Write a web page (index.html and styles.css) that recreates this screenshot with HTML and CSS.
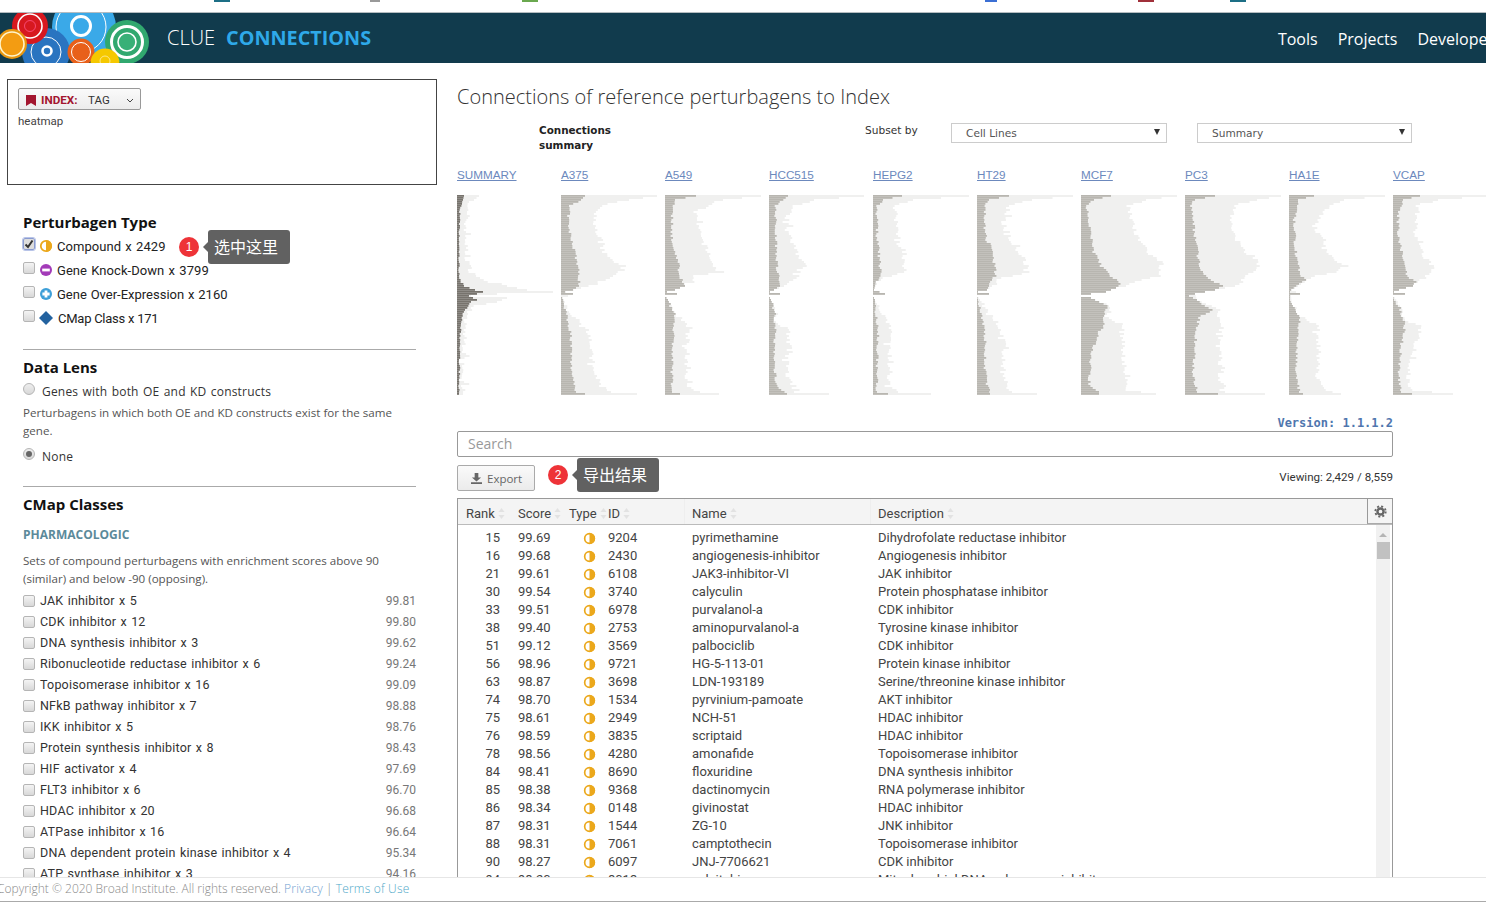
FILE: index.html
```html
<!DOCTYPE html>
<html lang="en">
<head>
<meta charset="utf-8">
<title>CLUE Connections</title>
<link rel="stylesheet" href="styles.css">
</head>
<body>
<svg class="defs" width="0" height="0" aria-hidden="true">
  <symbol id="i-half" viewBox="0 0 14 14"><circle cx="7" cy="7" r="5.2" fill="#fff" stroke="#eba81c" stroke-width="1.8"/><path d="M7 1v12a6 6 0 0 0 0-12z" fill="#eba81c"/></symbol>
  <symbol id="i-minus" viewBox="0 0 14 14"><circle cx="7" cy="7" r="6" fill="#a33bb8"/><rect x="3.2" y="5.6" width="7.6" height="2.8" fill="#fff"/></symbol>
  <symbol id="i-plus" viewBox="0 0 14 14"><circle cx="7" cy="7" r="6" fill="#3d9fd8"/><path d="M5.6 3.4h2.8v2.2h2.2v2.8H8.4v2.2H5.6V8.4H3.4V5.6h2.2z" fill="#fff"/></symbol>
  <symbol id="i-diamond" viewBox="0 0 14 14"><path d="M7 0l7 7-7 7-7-7z" fill="#23629f"/></symbol>
  <symbol id="i-sort" viewBox="0 0 7 11"><path d="M3.5 0L6.5 4H.5zM3.5 11L.5 7h6z" fill="#e2e2e2"/></symbol>
</svg>

<div class="bookmarks">
  <i class="bm bm-a"></i><i class="bm bm-b"></i><i class="bm bm-c"></i><i class="bm bm-d"></i><i class="bm bm-e"></i><i class="bm bm-f"></i>
</div>

<header class="topbar">
  <svg class="logo" viewBox="0 13 150 50" width="150" height="50" aria-label="CLUE logo">
    <circle cx="84" cy="27" r="32" fill="#3aa9e8"/>
    <circle cx="81" cy="27" r="25" fill="none" stroke="#fff" stroke-width="1"/>
    <circle cx="81" cy="26" r="9.5" fill="#3aa9e8" stroke="#fff" stroke-width="3"/>
    <circle cx="46" cy="52" r="24" fill="#2a74c0"/>
    <circle cx="46" cy="52" r="15" fill="none" stroke="#fff" stroke-width="1"/>
    <circle cx="47" cy="51" r="4.5" fill="#2a74c0" stroke="#fff" stroke-width="2.6"/>
    <circle cx="30" cy="26" r="18" fill="#d7181f"/>
    <circle cx="30" cy="26" r="12" fill="none" stroke="#fff" stroke-width="1.6"/>
    <circle cx="30" cy="26" r="5.5" fill="none" stroke="#f58" stroke-width=".8"/>
    <circle cx="12" cy="44" r="15" fill="#e8960f"/>
    <circle cx="12" cy="44" r="12" fill="#f39c12" stroke="#fff5cc" stroke-width="1.6"/>
    <circle cx="127" cy="42" r="22" fill="#31a86f"/>
    <circle cx="127" cy="42" r="15.5" fill="none" stroke="#fff" stroke-width="3"/>
    <circle cx="127" cy="42" r="9" fill="#38b077" stroke="#fff" stroke-width="1.6"/>
    <circle cx="81" cy="52" r="13.5" fill="#e8601a"/>
    <circle cx="81" cy="52" r="9.5" fill="none" stroke="#fff" stroke-width="1"/>
    <circle cx="105" cy="63" r="14.5" fill="#f5c800"/>
    <circle cx="105" cy="61" r="5" fill="none" stroke="#fde68a" stroke-width="1"/>
  </svg>
  <div class="brand"><span class="brand-light">CLUE</span><span class="brand-bold">CONNECTIONS</span></div>
  <nav class="nav"><a>Tools</a><a>Projects</a><a>Developer</a></nav>
</header>

<div class="main">
  <aside class="side">
    <div class="index-box">
      <button class="index-btn">
        <svg class="bookmark" viewBox="0 0 10 11" width="10" height="11"><path d="M0 0h10v11L5 8 0 11z" fill="#a3162f"/></svg>
        <b>INDEX:</b><span class="tag">TAG</span>
        <svg class="chev" viewBox="0 0 8 5" width="8" height="5"><path d="M1 1l3 3 3-3" fill="none" stroke="#444"/></svg>
      </button>
      <div class="heatmap">heatmap</div>
    </div>

    <section class="sec sec-type">
      <h3>Perturbagen Type</h3>
      <div class="pert"><span class="cb cb-on"><svg viewBox="0 0 12 12" width="12" height="12"><path d="M2.5 6.5l2.5 2.5 4.5-6.5" fill="none" stroke="#333" stroke-width="2"/></svg></span><svg class="pi"><use href="#i-half"/></svg><span>Compound x 2429</span></div>
      <div class="pert"><span class="cb"></span><svg class="pi"><use href="#i-minus"/></svg><span>Gene Knock-Down x 3799</span></div>
      <div class="pert"><span class="cb"></span><svg class="pi"><use href="#i-plus"/></svg><span class="pert-o">Gene Over-Expression x 2160</span></div>
      <div class="pert"><span class="cb"></span><svg class="pi pi-d"><use href="#i-diamond"/></svg><span class="pert-d">CMap Class x 171</span></div>
    </section>

    <section class="sec sec-lens">
      <h3>Data Lens</h3>
      <div class="radio-row"><span class="rd"></span><span>Genes with both OE and KD constructs</span></div>
      <p class="note note-lens">Perturbagens in which both OE and KD constructs exist for the same gene.</p>
      <div class="radio-row"><span class="rd rd-on"></span><span>None</span></div>
    </section>

    <section class="sec sec-classes">
      <h3>CMap Classes</h3>
      <h4>PHARMACOLOGIC</h4>
      <p class="note">Sets of compound perturbagens with enrichment scores above 90 (similar) and below -90 (opposing).</p>
      <ul class="classes">
        <li><span class="cb"></span><span class="cl">JAK inhibitor x 5</span><span class="cv">99.81</span></li>
        <li><span class="cb"></span><span class="cl">CDK inhibitor x 12</span><span class="cv">99.80</span></li>
        <li><span class="cb"></span><span class="cl">DNA synthesis inhibitor x 3</span><span class="cv">99.62</span></li>
        <li><span class="cb"></span><span class="cl">Ribonucleotide reductase inhibitor x 6</span><span class="cv">99.24</span></li>
        <li><span class="cb"></span><span class="cl">Topoisomerase inhibitor x 16</span><span class="cv">99.09</span></li>
        <li><span class="cb"></span><span class="cl">NFkB pathway inhibitor x 7</span><span class="cv">98.88</span></li>
        <li><span class="cb"></span><span class="cl">IKK inhibitor x 5</span><span class="cv">98.76</span></li>
        <li><span class="cb"></span><span class="cl">Protein synthesis inhibitor x 8</span><span class="cv">98.43</span></li>
        <li><span class="cb"></span><span class="cl">HIF activator x 4</span><span class="cv">97.69</span></li>
        <li><span class="cb"></span><span class="cl">FLT3 inhibitor x 6</span><span class="cv">96.70</span></li>
        <li><span class="cb"></span><span class="cl">HDAC inhibitor x 20</span><span class="cv">96.68</span></li>
        <li><span class="cb"></span><span class="cl">ATPase inhibitor x 16</span><span class="cv">96.64</span></li>
        <li><span class="cb"></span><span class="cl">DNA dependent protein kinase inhibitor x 4</span><span class="cv">95.34</span></li>
        <li><span class="cb"></span><span class="cl">ATP synthase inhibitor x 3</span><span class="cv">94.16</span></li>
      </ul>
    </section>
  </aside>

  <main class="content">
    <h1>Connections of reference perturbagens to Index</h1>
    <div class="controls">
      <div class="ctl-title">Connections<br>summary</div>
      <div class="ctl-label">Subset by</div>
      <div class="select sel-a"><span>Cell Lines</span><i class="caret"></i></div>
      <div class="select sel-b"><span>Summary</span><i class="caret"></i></div>
    </div>
    <div class="charts" id="charts"></div>
    <div class="version">Version: 1.1.1.2</div>
    <div class="search">Search</div>
    <div class="toolbar">
      <button class="export"><svg viewBox="0 0 12 12" width="11" height="11"><path d="M4 0h4v5h3L6 9.2 1 5h3zM0 10h12v2H0z" fill="#666"/></svg>Export</button>
      <div class="viewing">Viewing: 2,429 / 8,559</div>
    </div>
    <div class="grid">
      <div class="grid-head">
        <div class="gh gh-rank">Rank<svg class="sort"><use href="#i-sort"/></svg></div>
        <div class="gh gh-score">Score<svg class="sort"><use href="#i-sort"/></svg></div>
        <div class="gh gh-type">Type<svg class="sort"><use href="#i-sort"/></svg></div>
        <div class="gh gh-id">ID<svg class="sort"><use href="#i-sort"/></svg></div>
        <div class="gh gh-name">Name<svg class="sort"><use href="#i-sort"/></svg></div>
        <div class="gh gh-desc">Description<svg class="sort"><use href="#i-sort"/></svg></div>
        <div class="gear"><svg viewBox="0 0 14 14" width="13" height="13"><circle cx="7" cy="7" r="3.3" fill="none" stroke="#666" stroke-width="2.6"/><circle cx="7" cy="7" r="5.6" fill="none" stroke="#666" stroke-width="2" stroke-dasharray="2.2 2.2"/></svg></div>
      </div>
      <div class="grid-body">
        <div class="rows" id="rows"></div>
        <div class="scrollbar"><i class="sb-up"></i><i class="sb-thumb"></i></div>
      </div>
    </div>
  </main>
</div>

<footer class="foot">Copyright © 2020 Broad Institute. All rights reserved. <a>Privacy</a> | <a class="terms">Terms of Use</a></footer>

<div class="callout c1"><span class="dot">1</span><span class="tip">选中这里</span></div>
<div class="callout c2"><span class="dot">2</span><span class="tip">导出结果</span></div>

<script src="app.js"></script>
</body>
</html>
```
FILE: styles.css
```css
* { box-sizing: border-box; }
html, body { margin: 0; height: 905px; overflow: hidden; background: #fff; }
body { position: relative; font-family: Roboto, "Liberation Sans", sans-serif; color: #333; }
.defs { position: absolute; }

.bookmarks { height: 13px; border-bottom: 1px solid #b4bcc0; position: relative; overflow: hidden; }
.bm { position: absolute; top: 0; height: 2px; width: 16px; }
.bm-a { left: 214px; background: #1d6f86; }
.bm-b { left: 522px; background: #6aa84f; }
.bm-c { left: 985px; background: #3b6fd4; width: 12px; }
.bm-d { left: 1138px; background: #a0303a; }
.bm-e { left: 1230px; background: #1d6f86; }
.bm-f { left: 370px; background: #999; width: 10px; }

.topbar { height: 50px; background: #113b4d; display: flex; align-items: center; overflow: hidden; }
.logo { flex: none; display: block; }
.brand { margin-left: 17px; font-family: "Open Sans", sans-serif; font-size: 20px; display: flex; gap: 11px; padding-bottom: 2px; }
.brand-light { font-weight: 300; color: #fff; }
.brand-bold { font-weight: 700; color: #2ea9e9; font-size: 19.8px; }
.nav { margin-left: auto; display: flex; gap: 20px; font-family: "Open Sans", sans-serif; font-size: 16px; color: #fff; margin-right: -8px; padding-top: 1px; }

.main { height: 814px; display: flex; overflow: hidden; }

.side { width: 437px; flex: none; padding: 16px 21px 0 7px; }
.index-box { height: 106px; margin-right: -21px; border: 1px solid #444; padding: 8px 10px; }
.index-btn { display: flex; align-items: center; width: 123px; height: 22px; padding: 2px 0 0 7px; border: 1px solid #999; border-radius: 2px; background: linear-gradient(#fafafa, #ececec); font: 11.5px Roboto, sans-serif; color: #333; }
.index-btn b { margin-left: 5px; color: #a3162f; font-weight: 700; font-size: 11.7px; }
.tag { margin-left: 10.5px; }
.chev { margin-left: 16px; }
.heatmap { font-size: 11.5px; line-height: 14px; margin-top: 4px; color: #444; }

.sec { margin-left: 16px; }
.sec h3 { margin: 0; font: 700 15px/20px "Open Sans", sans-serif; color: #111; }
.sec-type { margin-top: 27px; border-bottom: 1px solid #aaa; height: 138px; }
.sec-type h3 { margin-bottom: 2px; }
.pert { display: flex; align-items: center; height: 24px; font-family: Roboto, sans-serif; font-size: 13px; letter-spacing: .05px; word-spacing: 1px; color: #222; }
.pert .cb { margin-top: -4px; }
.pi { width: 14px; height: 14px; margin: 0 4px; flex: none; }
.pert-o { letter-spacing: 0; word-spacing: .6px; }
.pert-d { margin-left: 1px; letter-spacing: -.25px; word-spacing: 0; }
.cb { width: 12px; height: 12px; flex: none; border: 1px solid #b5b5b5; border-radius: 2px; background: linear-gradient(#f4f4f4, #d8d8d8); display: inline-block; position: relative; }
.cb-on { border-color: #8a9bd0; outline: 1px solid #b8c4e8; background: #ddd; }
.cb-on svg { display: block; margin: -1px; }

.sec-lens { margin-top: 7px; height: 130px; border-bottom: 1px solid #aaa; }
.radio-row { display: flex; align-items: center; gap: 7px; font-family: "Open Sans", sans-serif; font-size: 12px; letter-spacing: .2px; word-spacing: 1px; height: 18px; color: #333; }
.sec-lens .radio-row { margin-top: 5px; }
.rd { width: 12px; height: 12px; border-radius: 50%; border: 1px solid #b5b5b5; background: linear-gradient(#eee, #d8d8d8); margin-top: -4px; flex: none; position: relative; }
.rd-on::after { content: ""; position: absolute; left: 2px; top: 2px; width: 6px; height: 6px; border-radius: 50%; background: #666; }
.note { margin: 0; font: 11.6px/17.5px "Open Sans", sans-serif; color: #555; }
.note-lens { margin: 4px 0 8px; }
.sec-lens .note-lens + .radio-row { margin-top: 8px; }

.sec-classes { margin-top: 7px; }
.sec-classes h4 { margin: 13px 0 9px; font: 700 12px/16px "Open Sans", sans-serif; color: #5b8a9a; }
.classes { list-style: none; margin: 3px 0 0; padding: 0; width: 393px; }
.classes li { display: flex; align-items: center; height: 21px; font-size: 12.5px; color: #333; letter-spacing: .2px; word-spacing: 1px; }
.cl { margin-left: 5px; }
.cv { margin-left: auto; color: #777; font-size: 12px; letter-spacing: 0; }

.content { width: 936px; flex: none; margin-left: 20px; overflow: visible; }
.content h1 { margin: 20px 0 12px; font: 300 20px/28px "Open Sans", sans-serif; color: #333; }
.controls { display: flex; height: 30px; font: 10.6px/15px "DejaVu Sans", sans-serif; color: #333; }
.ctl-title { width: 326px; flex: none; margin-left: 82px; font-weight: 700; font-size: 10.4px; color: #222; }
.ctl-label { width: 86px; flex: none; color: #333; }
.select { height: 20px; flex: none; border: 1px solid #ccc; display: flex; align-items: center; justify-content: space-between; padding: 0 6px 0 14px; color: #555; }
.sel-a { width: 216px; }
.sel-b { width: 215px; margin-left: 30px; }
.caret { border-left: 3.5px solid transparent; border-right: 3.5px solid transparent; border-top: 6px solid #333; margin-top: -2px; }

.charts { display: flex; gap: 8px; margin-top: 15px; width: 1040px; height: 227px; }
.chart { width: 96px; flex: none; }
.chart a { display: block; height: 14px; font: 11.7px/14px "Liberation Sans", sans-serif; color: #6c89bd; text-decoration: underline; margin-bottom: 13px; }
.chart svg { display: block; width: 96px; height: 200px; }
.bar-light { fill: #f0f0ef; }
.bar-dark { fill: #b8b6b0; }
.bar-dark-sum { fill: #77736d; }

.version { margin-top: 21px; text-align: right; font: 700 12px/14px "DejaVu Sans Mono", monospace; color: #4f76ae; }
.search { margin-top: 1px; height: 26px; border: 1px solid #999; border-radius: 2px; padding-left: 10px; font: 14px/24px "Open Sans", sans-serif; color: #999; }
.toolbar { display: flex; justify-content: space-between; align-items: center; margin-top: 8px; height: 26px; }
.export { display: flex; align-items: center; gap: 5px; width: 78px; height: 26px; padding: 0 0 0 13px; border: 1px solid #aaa; border-radius: 2px; background: linear-gradient(#fafafa, #ebebeb); font: 11.5px "Open Sans", sans-serif; color: #666; }
.viewing { font-size: 11.6px; color: #333; padding-bottom: 2px; }

.grid { margin-top: 7px; border: 1px solid #999; border-bottom: 0; height: 400px; }
.grid-head { display: flex; height: 26px; background: #f4f4f4; border-bottom: 1px solid #bbb; font-size: 13px; line-height: 29px; color: #444; position: relative; }
.gh { flex: none; white-space: nowrap; }
.gh-rank { width: 52px; padding-left: 8px; }
.gh-score { width: 51px; padding-left: 8px; }
.gh-type { width: 39px; padding-left: 8px; }
.gh-id { width: 84px; padding-left: 8px; }
.gh-name { width: 186px; padding-left: 7px; border-left: 1px solid #eee; }
.gh-desc { flex: 1; padding-left: 7px; border-left: 1px solid #eee; }
.sort { width: 7px; height: 11px; margin-left: 3px; vertical-align: -1px; }
.gear { position: absolute; right: 0; top: 0; width: 25px; height: 25px; border-left: 1px solid #999; border-bottom: 1px solid #aaa; background: #f4f4f4; display: flex; align-items: center; justify-content: center; }

.grid-body { display: flex; height: 374px; overflow: hidden; }
.rows { flex: 1; padding-top: 4px; font-size: 13px; line-height: 18px; color: #444; }
.row { display: flex; height: 18px; white-space: nowrap; }
.r-rank { width: 42px; text-align: right; }
.r-score { width: 60px; padding-left: 18px; }
.r-type { width: 36px; display: flex; align-items: center; justify-content: flex-end; }
.r-type svg { width: 13px; height: 13px; }
.r-id { width: 96px; padding-left: 12px; }
.r-name { width: 186px; }
.r-desc { flex: 1; }
.scrollbar { width: 14px; flex: none; margin-right: 2px; background: #f1f1f1; position: relative; }
.sb-up { position: absolute; left: 3px; top: 8px; border-left: 4px solid transparent; border-right: 4px solid transparent; border-bottom: 4px solid #b5b5b5; }
.sb-thumb { position: absolute; left: 1px; right: 0; top: 17px; height: 17px; background: #c1c1c1; }

.foot { height: 25px; text-indent: -3px; border-top: 1px solid #e6e6e6; border-bottom: 1px solid #aaa; background: #fff; font: 300 12px/22px "Open Sans", sans-serif; color: #8a8a8a; white-space: nowrap; }
.foot a { color: #6f9fd0; letter-spacing: .2px; }
.foot .terms { color: #4fa8c8; }

.callout { position: absolute; display: flex; align-items: center; font-family: "Noto Sans CJK SC", sans-serif; }
.c1 { left: 179px; top: 230px; }
.c2 { left: 548px; top: 458px; }
.dot { width: 20px; height: 20px; border-radius: 50%; background: #ee3338; color: #fff; font: 12px/20px "Liberation Sans", sans-serif; text-align: center; }
.tip { margin-left: 9px; width: 82px; height: 34px; background: #616161; border-radius: 3px; color: #fff; font-size: 16px; line-height: 33px; padding-left: 6px; position: relative; }
.tip::before { content: ""; position: absolute; left: -5px; top: 12px; border-top: 5px solid transparent; border-bottom: 5px solid transparent; border-right: 5px solid #616161; }
```
FILE: app.js
```js
// Histogram profiles: [row, width] control points for dark and light bars of each cell line.
var CHARTS = [
  ['SUMMARY', [[0,7],[4,5],[6,3],[20,2],[38,2],[42,3],[45,7],[47,18],[48,26],[49,20],[50,12],[52,20],[53,14],[56,10],[60,5],[70,3],[100,2]],
              [[0,22],[4,12],[8,9],[30,9],[38,14],[43,30],[46,60],[47,70],[48,96],[49,40],[50,14],[51,50],[53,40],[55,18],[60,8],[100,6]], true],
  ['A375', [[0,24],[2,20],[5,8],[15,7],[30,15],[40,18],[45,18],[47,12],[48,4],[49,12],[50,0],[52,2],[60,6],[70,10],[85,10],[98,15],[99,24]],
           [[0,96],[2,68],[4,45],[8,33],[20,35],[30,45],[35,60],[37,60],[40,50],[44,35],[46,20],[48,5],[49,12],[51,2],[60,10],[66,25],[70,30],[85,30],[95,40],[98,50],[99,76]]],
  ['A549', [[0,31],[2,10],[10,7],[25,7],[30,12],[40,15],[45,20],[47,10],[48,2],[49,12],[50,0],[52,3],[60,10],[80,7],[98,7],[99,15]],
           [[0,96],[2,58],[8,30],[20,35],[30,45],[35,48],[38,55],[40,30],[45,20],[48,2],[49,12],[50,0],[52,3],[60,10],[66,25],[80,20],[95,23],[98,35],[99,54]]],
  ['HCC515', [[0,19],[3,12],[5,6],[20,7],[30,8],[35,8],[45,11],[47,5],[48,1],[49,11],[50,0],[52,2],[58,6],[70,6],[85,5],[95,8],[99,18]],
             [[0,95],[2,45],[5,28],[10,18],[20,20],[30,30],[35,36],[40,28],[45,15],[47,5],[48,1],[49,11],[50,0],[52,2],[64,7],[66,20],[80,18],[90,18],[95,25],[98,25],[99,60]]],
  ['HEPG2', [[0,29],[2,10],[5,4],[20,4],[30,6],[40,8],[43,3],[47,1],[49,12],[50,0],[52,2],[60,3],[70,5],[85,4],[98,4],[99,15]],
            [[0,96],[2,40],[5,22],[20,25],[30,30],[35,30],[38,33],[40,18],[42,5],[47,1],[49,12],[50,0],[52,1],[60,10],[66,18],[80,15],[95,15],[98,25],[99,58]]],
  ['HT29', [[0,32],[2,12],[5,7],[15,8],[22,9],[25,14],[30,15],[35,18],[40,18],[45,12],[47,10],[48,1],[49,12],[50,0],[52,1],[60,5],[70,8],[85,8],[95,10],[99,13]],
           [[0,96],[2,55],[5,33],[15,25],[20,30],[30,45],[35,50],[38,50],[40,35],[42,20],[45,15],[47,10],[48,1],[49,12],[50,0],[52,3],[60,15],[65,22],[75,28],[85,25],[95,28],[98,35],[99,60]]],
  ['MCF7', [[0,30],[2,13],[5,6],[15,8],[25,12],[28,12],[30,16],[35,20],[40,30],[42,35],[44,40],[46,35],[48,25],[49,10],[50,0],[51,10],[55,26],[60,22],[65,22],[70,16],[80,10],[95,8],[98,18]],
           [[0,96],[2,65],[5,48],[10,50],[20,55],[30,70],[33,82],[35,80],[40,75],[43,50],[45,45],[47,25],[49,10],[50,0],[51,10],[55,28],[60,28],[65,40],[70,38],[80,42],[90,45],[97,45],[99,75]]],
  ['PC3', [[0,30],[2,10],[5,6],[20,10],[25,12],[30,13],[35,15],[40,20],[43,30],[45,38],[47,30],[49,10],[50,4],[52,12],[55,20],[57,28],[60,15],[65,12],[75,10],[90,8],[98,12],[99,33]],
          [[0,96],[2,72],[5,50],[15,45],[25,55],[30,65],[33,75],[38,70],[40,60],[43,55],[45,50],[47,30],[49,10],[52,12],[57,35],[60,32],[65,35],[75,35],[90,35],[98,40],[99,80]]],
  ['HA1E', [[0,25],[2,9],[5,8],[12,5],[25,6],[32,8],[40,12],[42,16],[44,10],[47,2],[48,1],[49,11],[50,1],[52,1],[55,3],[60,10],[65,10],[75,8],[90,7],[98,10],[99,14]],
           [[0,96],[2,55],[5,40],[15,25],[25,35],[30,42],[35,55],[38,50],[40,25],[44,12],[47,3],[49,11],[50,2],[55,3],[60,12],[65,28],[75,30],[90,28],[97,35],[99,52]]],
  ['VCAP', [[0,27],[2,10],[8,5],[20,5],[28,9],[35,11],[40,14],[43,24],[45,20],[47,6],[48,1],[49,12],[50,0],[52,1],[55,6],[60,9],[65,12],[75,8],[90,6],[98,8],[99,19]],
           [[0,93],[2,45],[5,25],[20,22],[30,30],[35,40],[38,40],[40,30],[43,24],[47,6],[48,1],[49,12],[50,0],[55,8],[62,12],[65,28],[68,27],[75,22],[90,15],[97,18],[99,60]]]
];

var ROWS = [
  [15,'99.69','9204','pyrimethamine','Dihydrofolate reductase inhibitor'],
  [16,'99.68','2430','angiogenesis-inhibitor','Angiogenesis inhibitor'],
  [21,'99.61','6108','JAK3-inhibitor-VI','JAK inhibitor'],
  [30,'99.54','3740','calyculin','Protein phosphatase inhibitor'],
  [33,'99.51','6978','purvalanol-a','CDK inhibitor'],
  [38,'99.40','2753','aminopurvalanol-a','Tyrosine kinase inhibitor'],
  [51,'99.12','3569','palbociclib','CDK inhibitor'],
  [56,'98.96','9721','HG-5-113-01','Protein kinase inhibitor'],
  [63,'98.87','3698','LDN-193189','Serine/threonine kinase inhibitor'],
  [74,'98.70','1534','pyrvinium-pamoate','AKT inhibitor'],
  [75,'98.61','2949','NCH-51','HDAC inhibitor'],
  [76,'98.59','3835','scriptaid','HDAC inhibitor'],
  [78,'98.56','4280','amonafide','Topoisomerase inhibitor'],
  [84,'98.41','8690','floxuridine','DNA synthesis inhibitor'],
  [85,'98.38','9368','dactinomycin','RNA polymerase inhibitor'],
  [86,'98.34','0148','givinostat','HDAC inhibitor'],
  [87,'98.31','1544','ZG-10','JNK inhibitor'],
  [88,'98.31','7061','camptothecin','Topoisomerase inhibitor'],
  [90,'98.27','6097','JNJ-7706621','CDK inhibitor'],
  [94,'98.20','8013','zalcitabine','Mitochondrial DNA polymerase inhibitor']
];

function interp(points, row) {
  for (var i = 1; i < points.length; i++) {
    if (row <= points[i][0]) {
      var a = points[i - 1], b = points[i];
      return a[1] + (b[1] - a[1]) * (row - a[0]) / (b[0] - a[0]);
    }
  }
  return points[points.length - 1][1];
}

var seed = 7;
function rnd() { seed = (seed * 16807) % 2147483647; return seed / 2147483647; }

function chartSvg(c) {
  var out = '<svg viewBox="0 0 96 200" aria-hidden="true">';
  for (var r = 0; r < 100; r++) {
    var key = (r < 3 || r > 97 || (r > 44 && r < 54));
    var jl = key ? 0 : (rnd() - .5) * 5 * (rnd() < .2 ? 2.4 : 1);
    var jd = key ? 0 : (rnd() - .5) * 3 * (c[3] ? .5 : 1);
    var d = Math.max(0, interp(c[1], r) + jd);
    var l = Math.max(d, interp(c[2], r) + jl);
    out += '<rect class="bar-light" x="0" y="' + 2 * r + '" width="' + l.toFixed(1) + '" height="2"/>';
    out += '<rect class="' + (c[3] ? 'bar-dark-sum' : 'bar-dark') + '" x="0" y="' + 2 * r + '" width="' + d.toFixed(1) + '" height="1.8"/>';
  }
  return out + '</svg>';
}

document.getElementById('charts').innerHTML = CHARTS.map(function (c) {
  return '<div class="chart"><a>' + c[0] + '</a>' + chartSvg(c) + '</div>';
}).join('');

document.getElementById('rows').innerHTML = ROWS.map(function (r) {
  return '<div class="row"><span class="r-rank">' + r[0] + '</span><span class="r-score">' + r[1] +
    '</span><span class="r-type"><svg><use href="#i-half"/></svg></span><span class="r-id">' + r[2] +
    '</span><span class="r-name">' + r[3] + '</span><span class="r-desc">' + r[4] + '</span></div>';
}).join('');
```
